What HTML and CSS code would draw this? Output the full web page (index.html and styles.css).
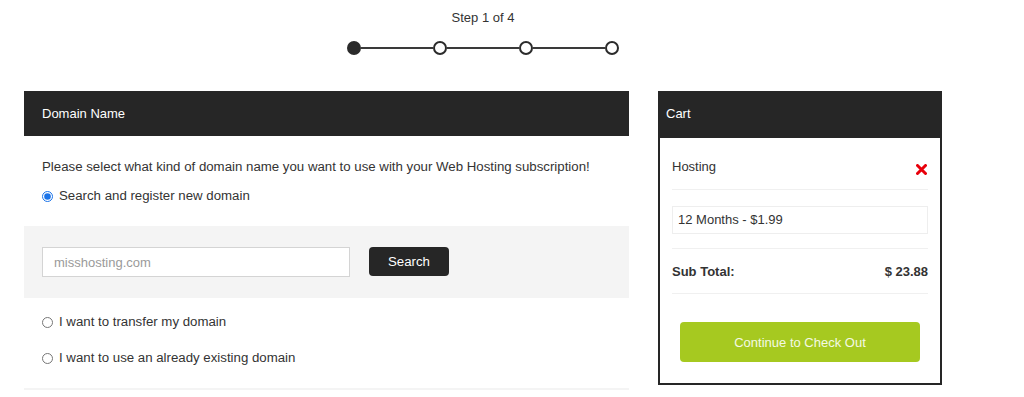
FILE: index.html
```html
<html>

<head>
  <title>Order - Domain Name</title>
  <link rel="stylesheet" href="styles.css">
</head>

<body>

  <div class="page">
    <div class="steps">
      <p class="steps-label">Step 1 of 4</p>
      <div class="steps-track">
        <span class="dot active"></span>
        <span class="bar"></span>
        <span class="dot"></span>
        <span class="bar"></span>
        <span class="dot"></span>
        <span class="bar"></span>
        <span class="dot"></span>
      </div>
    </div>

    <div class="columns">
      <div class="panel">
        <div class="panel-head">Domain Name</div>

        <div class="panel-intro">
          <p>Please select what kind of domain name you want to use with your Web Hosting subscription!</p>
          <label class="choice"><input type="radio" name="domain" checked> Search and register new domain</label>
        </div>

        <div class="search-box">
          <input class="search-input" type="text" placeholder="misshosting.com">
          <button class="search-btn">Search</button>
        </div>

        <div class="panel-options">
          <label class="choice"><input type="radio" name="domain"> I want to transfer my domain</label>
          <label class="choice"><input type="radio" name="domain"> I want to use an already existing domain</label>
        </div>
      </div>

      <div class="cart">
        <div class="cart-head">Cart</div>
        <div class="cart-body">
          <div class="cart-row">
            <span>Hosting</span>
            <svg class="remove" width="11" height="11" viewBox="0 0 11 11">
              <path d="M1.5 1.5 L9.5 9.5 M9.5 1.5 L1.5 9.5" stroke="#e8000b" stroke-width="3" stroke-linecap="round" />
            </svg>
          </div>
          <div class="cart-period">
            <div class="period-select">12 Months - $1.99</div>
          </div>
          <div class="cart-total">
            <span>Sub Total:</span>
            <span>$ 23.88</span>
          </div>
          <button class="checkout">Continue to Check Out</button>
        </div>
      </div>
    </div>
  </div>

</body>

</html>
```

FILE: styles.css
```css
:root {
  --dark: #262626;
  --text: #333;
  --muted: #f4f4f4;
  --green: #a6c920;
}

* {
  margin: 0;
  padding: 0;
  box-sizing: border-box;
  font-family: "Liberation Sans", Arial, sans-serif;
}

body {
  background: #fff;
  color: var(--text);
  font-size: 13px;
}

.page {
  width: 918px;
  margin-left: 24px;
}

.steps {
  display: flex;
  flex-direction: column;
  align-items: center;
  padding-top: 10px;
  height: 91px;
}

.steps-label {
  font-size: 13px;
  line-height: 16px;
  color: #333;
}

.steps-track {
  display: flex;
  align-items: center;
  margin-top: 15px;
}

.dot {
  width: 14px;
  height: 14px;
  border-radius: 50%;
  border: 2px solid #2b2b2b;
  background: #fff;
}

.dot.active {
  background: #2b2b2b;
}

.bar {
  width: 72px;
  height: 2px;
  background: #3a3a3a;
}

.columns {
  display: flex;
  align-items: flex-start;
  gap: 29px;
}

.panel {
  width: 605px;
  border-bottom: 2px solid var(--muted);
}

.panel-head {
  background: var(--dark);
  color: #fff;
  height: 45px;
  line-height: 45px;
  padding-left: 18px;
  font-size: 13px;
}

.panel-intro {
  padding: 23px 18px 0;
  height: 90px;
}

.panel-intro p {
  font-size: 13.25px;
  line-height: 16px;
  margin-bottom: 13px;
}

.choice {
  display: flex;
  align-items: center;
  gap: 6px;
  font-size: 13.25px;
  line-height: 16px;
}

.choice input {
  width: 11px;
  height: 11px;
  margin: 0;
  accent-color: #1a73e8;
}

.search-box {
  background: var(--muted);
  height: 72px;
  display: flex;
  align-items: center;
  padding: 0 18px;
  gap: 19px;
}

.search-input {
  width: 308px;
  height: 30px;
  border: 1px solid #d4d4d4;
  background: #fff;
  padding: 0 11px;
  font-size: 13px;
  color: var(--text);
}

.search-input::placeholder {
  color: #9a9a9a;
}

.search-btn {
  width: 80px;
  height: 29px;
  margin-bottom: 1px;
  background: var(--dark);
  color: #fff;
  border: none;
  border-radius: 4px;
  font-size: 13.25px;
}

.panel-options {
  display: flex;
  flex-direction: column;
  gap: 20px;
  padding: 16px 18px 22px;
}

.cart {
  width: 284px;
  border: 2px solid var(--dark);
}

.cart-head {
  background: var(--dark);
  color: #fff;
  height: 45px;
  line-height: 42px;
  padding-left: 6px;
  font-size: 13px;
}

.cart-body {
  padding: 0 12px 21px;
}

.cart-row {
  display: flex;
  justify-content: space-between;
  align-items: center;
  height: 52px;
  padding-top: 6px;
  border-bottom: 1px solid #f0f0f0;
}

.remove {
  margin-top: 6px;
  margin-right: 1px;
}

.cart-period {
  padding: 16px 0 14px;
  border-bottom: 1px solid #f0f0f0;
}

.period-select {
  height: 28px;
  line-height: 26px;
  border: 1px solid #eee;
  padding: 0 5px;
  font-size: 13px;
}

.cart-total {
  display: flex;
  justify-content: space-between;
  align-items: center;
  height: 45px;
  font-weight: bold;
  font-size: 13px;
  border-bottom: 1px solid #f0f0f0;
  margin-bottom: 28px;
}

.checkout {
  display: block;
  width: 240px;
  height: 40px;
  margin: 0 auto;
  background: var(--green);
  color: #f4f9e4;
  border: none;
  border-radius: 4px;
  font-size: 13px;
}
```
